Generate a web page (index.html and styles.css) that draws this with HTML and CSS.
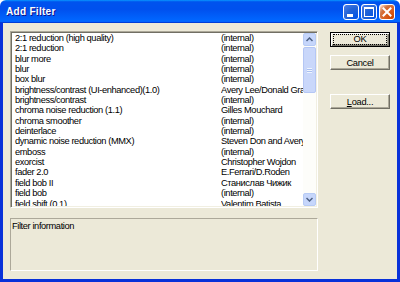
FILE: index.html
```html
<!DOCTYPE html>
<html lang="en">
<head>
  <meta charset="UTF-8">
  <title>Add Filter</title>
  <link rel="stylesheet" href="styles.css">
</head>
<body>
  <div class="window">
    <!-- Title bar -->
    <div class="titlebar">
      <span class="title">Add Filter</span>
      <div class="controls">
        <span class="ctl">
          <svg width="16" height="16" viewBox="0 0 16 16"><rect x="4" y="10" width="6" height="3" fill="#fff"/></svg>
        </span>
        <span class="ctl">
          <svg width="16" height="16" viewBox="0 0 16 16"><rect x="3.5" y="3.5" width="9" height="9" fill="none" stroke="#fff"/><rect x="3" y="3" width="10" height="2" fill="#fff"/></svg>
        </span>
        <span class="ctl close">
          <svg width="16" height="16" viewBox="0 0 16 16"><path d="M4.5 4.5 L11.5 11.5 M11.5 4.5 L4.5 11.5" stroke="#fff" stroke-width="2" stroke-linecap="square"/></svg>
        </span>
      </div>
    </div>

    <div class="frame">
      <div class="main">
        <!-- Filter list -->
        <div class="listbox">
          <div class="rows" id="rows"></div>
          <div class="scrollbar">
            <div class="sb-btn">
              <svg width="7" height="5" viewBox="0 0 7 5"><path d="M0.5 4 L3.5 1 L6.5 4" fill="none" stroke="#4d6185" stroke-width="1.5"/></svg>
            </div>
            <div class="sb-thumb"><span class="grip"></span></div>
            <div class="sb-track"></div>
            <div class="sb-btn">
              <svg width="7" height="5" viewBox="0 0 7 5"><path d="M0.5 1 L3.5 4 L6.5 1" fill="none" stroke="#4d6185" stroke-width="1.5"/></svg>
            </div>
          </div>
        </div>

        <div class="info">Filter information</div>
      </div>

      <!-- Dialog buttons -->
      <div class="buttons">
        <button class="btn default"><span class="focus">OK</span></button>
        <button class="btn">Cancel</button>
        <button class="btn load"><u>L</u>oad...</button>
      </div>
    </div>
  </div>

  <script>
    const filters = [
      ['2:1 reduction (high quality)', '(internal)'],
      ['2:1 reduction', '(internal)'],
      ['blur more', '(internal)'],
      ['blur', '(internal)'],
      ['box blur', '(internal)'],
      ['brightness/contrast (UI-enhanced)(1.0)', 'Avery Lee/Donald Graft'],
      ['brightness/contrast', '(internal)'],
      ['chroma noise reduction (1.1)', 'Gilles Mouchard'],
      ['chroma smoother', '(internal)'],
      ['deinterlace', '(internal)'],
      ['dynamic noise reduction (MMX)', 'Steven Don and Avery Lee'],
      ['emboss', '(internal)'],
      ['exorcist', 'Christopher Wojdon'],
      ['fader 2.0', 'E.Ferrari/D.Roden'],
      ['field bob II', 'Станислав Чижик'],
      ['field bob', '(internal)'],
      ['field shift (0.1)', 'Valentim Batista']
    ];

    const rows = document.getElementById('rows');
    filters.forEach(([name, author]) => {
      const row = document.createElement('div');
      row.className = 'row';
      row.innerHTML = `<span class="name">${name}</span><span class="author">${author}</span>`;
      rows.appendChild(row);
    });
  </script>
</body>
</html>
```

FILE: styles.css
```css
/* Page */
body {
  margin: 0;
  background: #fff;
  font-family: "Liberation Sans", Arial, sans-serif;
}

.window {
  width: 400px;
  height: 282px;
  display: flex;
  flex-direction: column;
}

/* Title bar */
.titlebar {
  height: 23px;
  display: flex;
  align-items: center;
  justify-content: space-between;
  padding: 0 5px 0 6px;
  border-radius: 6px 6px 0 0;
  background: linear-gradient(180deg, #0997ff, #0053ee 8%, #0050ee 40%, #06f 88%, #06f 93%, #005bff 95%, #003dd7 96%, #003dd7);
}

.title {
  color: #fff;
  font-weight: bold;
  font-size: 10px;
  letter-spacing: 0.3px;
  text-shadow: 1px 1px #0f1089;
}

.controls {
  display: flex;
  gap: 2px;
}

.ctl {
  width: 16px;
  height: 16px;
  box-sizing: border-box;
  border: 1px solid #fff;
  border-radius: 3px;
  background: radial-gradient(circle at 90% 90%, #0054e9 0%, #2263d5 55%, #4479e4 90%, #fff 100%);
  display: flex;
}

.ctl svg {
  margin: -1px;
}

.ctl.close {
  background: radial-gradient(circle at 90% 90%, #cc4600 0%, #dc6527 55%, #cd7546 70%, #ffccb2 90%, #fff 100%);
}

/* Dialog body */
.frame {
  flex: 1;
  display: flex;
  background: #ece9d8;
  border: 3px solid #0831d9;
  border-top: none;
  padding: 8px 7px 0 7px;
}

.main {
  width: 308px;
  display: flex;
  flex-direction: column;
}

/* List box with sunken border */
.listbox {
  height: 177px;
  box-sizing: border-box;
  display: flex;
  background: #fff;
  border: 1px solid;
  border-color: #aca899 #fff #fff #aca899;
  box-shadow: inset 1px 1px #716f64, inset -1px -1px #f1efe2;
  padding: 1px;
}

.rows {
  flex: 1;
  overflow: hidden;
  padding: 0 0 0 3px;
  font-size: 9.3px;
  letter-spacing: -0.4px;
  color: #000;
}

.row {
  display: flex;
  height: 10.35px;
  line-height: 10.35px;
  white-space: nowrap;
}

.name {
  width: 206px;
  flex-shrink: 0;
}

.author {
  flex: 1;
  overflow: hidden;
}

/* Scrollbar */
.scrollbar {
  width: 13px;
  display: flex;
  flex-direction: column;
  background: #fdfdfa;
}

.sb-btn {
  height: 13px;
  box-sizing: border-box;
  border: 1px solid #b7cbf5;
  border-radius: 2px;
  background: #c6d6fb;
  display: flex;
  align-items: center;
  justify-content: center;
}

.sb-thumb {
  height: 46px;
  margin-top: 1px;
  box-sizing: border-box;
  border: 1px solid #b4c6f4;
  border-radius: 2px;
  background: #c9d7fa;
  display: flex;
  align-items: center;
  justify-content: center;
}

.grip {
  width: 5px;
  height: 5px;
  background: repeating-linear-gradient(180deg, #eef4fe 0 1px, #a9bff0 1px 2px);
}

.sb-track {
  flex: 1;
}

/* Information panel */
.info {
  margin-top: 10px;
  height: 53px;
  box-sizing: border-box;
  border: 1px solid;
  border-color: #aca899 #fff #fff #aca899;
  padding: 2px 1px;
  font-size: 9.3px;
  letter-spacing: -0.4px;
}

/* Buttons */
.buttons {
  margin-left: 12px;
  width: 60px;
  display: flex;
  flex-direction: column;
}

.btn {
  height: 15px;
  box-sizing: border-box;
  margin: 0 0 8px 0;
  padding: 0;
  font-family: "Liberation Sans", Arial, sans-serif;
  font-size: 9.3px;
  letter-spacing: -0.3px;
  color: #000;
  background: #ece9d8;
  border: 1px solid;
  border-color: #fff #716f64 #716f64 #fff;
  box-shadow: inset -1px -1px #aca899;
}

.btn.default {
  margin-top: 1px;
  border: 1px solid #000;
  box-shadow: inset 1px 1px #fff, inset -1px -1px #716f64, inset -2px -2px #aca899;
}

.focus {
  display: block;
  margin: 1px 2px 2px 2px;
  border: 1px dotted #000;
  line-height: 9px;
}

.btn.load {
  margin-top: 16px;
}
```
